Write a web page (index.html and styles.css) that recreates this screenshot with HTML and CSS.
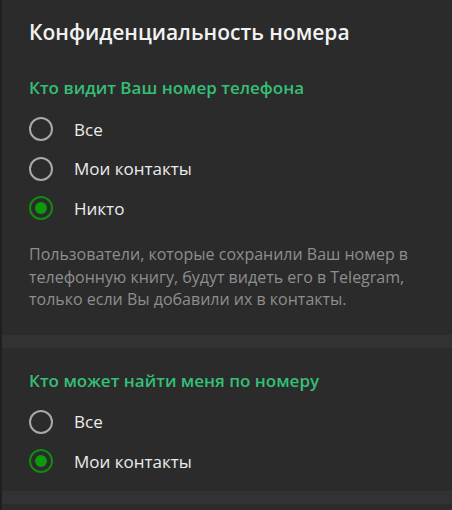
FILE: index.html
```html
<!DOCTYPE html>
<html lang="ru">
<head>
<meta charset="utf-8">
<link rel="stylesheet" href="styles.css">
</head>
<body>
<div class="panel">
  <h1 class="title">Конфиденциальность номера</h1>
  <section class="group first">
    <h2 class="group-title">Кто видит Ваш номер телефона</h2>
    <div class="options">
      <div class="option"><span class="radio"></span><span class="label">Все</span></div>
      <div class="option"><span class="radio"></span><span class="label">Мои контакты</span></div>
      <div class="option"><span class="radio checked"></span><span class="label">Никто</span></div>
    </div>
    <p class="about">Пользователи, которые сохранили Ваш номер в телефонную книгу, будут видеть его в Telegram, только если Вы добавили их в контакты.</p>
  </section>
  <div class="sep"></div>
  <section class="group second">
    <h2 class="group-title">Кто может найти меня по номеру</h2>
    <div class="options">
      <div class="option"><span class="radio"></span><span class="label">Все</span></div>
      <div class="option"><span class="radio checked"></span><span class="label">Мои контакты</span></div>
    </div>
  </section>
  <div class="sep"></div>
</div>
</body>
</html>
```
FILE: styles.css
```css
html, body {
  margin: 0;
  padding: 0;
  background: #2b2b2b;
  height: 100%;
}
body {
  font-family: "Open Sans", "Noto Sans", sans-serif;
  overflow: hidden;
}
.panel {
  border-left: 2px solid #1f1f1f;
  min-height: 510px;
  box-sizing: border-box;
}
.title {
  margin: 0;
  padding: 18px 0 0 27px;
  font-size: 21px;
  line-height: 28px;
  font-weight: 600;
  color: #f2f2f2;
}
.group {
  padding-left: 27px;
}
.group.first {
  padding-top: 32px;
  padding-bottom: 24px;
}
.group.second {
  padding-top: 23px;
  padding-bottom: 10px;
}
.group-title {
  margin: 0;
  font-size: 17px;
  line-height: 20px;
  font-weight: 600;
  color: #35bf76;
}
.options {
  padding-top: 11.5px;
}
.option {
  display: flex;
  align-items: center;
  height: 39.5px;
}
.radio {
  box-sizing: border-box;
  width: 24px;
  height: 24px;
  border: 2px solid #a9a9a9;
  border-radius: 50%;
  display: flex;
  align-items: center;
  justify-content: center;
}
.radio.checked {
  border-color: #108a10;
}
.radio.checked::after {
  content: "";
  width: 12px;
  height: 12px;
  border-radius: 50%;
  background: #0a9a0a;
}
.label {
  margin-left: 21px;
  font-size: 17px;
  color: #ececec;
}
.about {
  margin: 15px 0 0;
  padding-right: 30px;
  font-size: 16px;
  line-height: 22.5px;
  color: #8e8e8e;
}
.sep {
  height: 13px;
  background: #323232;
}
```
